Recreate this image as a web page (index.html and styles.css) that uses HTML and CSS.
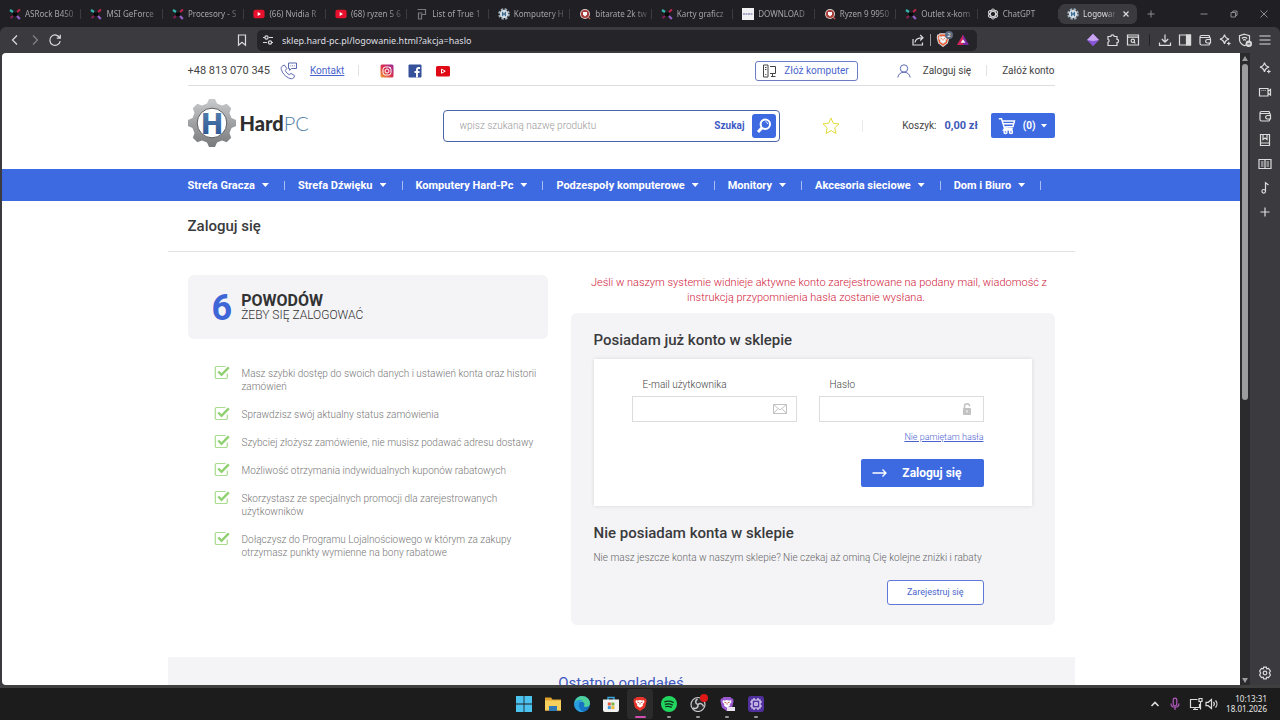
FILE: index.html
```html
<!DOCTYPE html>
<html lang="pl">
<head>
  <meta charset="UTF-8">
  <meta name="viewport" content="width=device-width, initial-scale=1">
  <title>Logowanie - HardPC</title>
  <link rel="stylesheet" href="styles.css">
</head>
<body>

<!-- Wspólne ikony -->
<svg class="sprite" aria-hidden="true">
  <symbol id="i-xkom" viewBox="0 0 12 12">
    <path d="M4 4 6 5 8 4 8.500 6 8 8.500 6 8 4 8.500 3.500 6z" fill="#0a0a0c"/>
    <path d="M1 2l3 2" stroke="#35b5ad" stroke-width="2.200"/>
    <path d="M11 1.500 8 4" stroke="#c2264c" stroke-width="2"/>
    <path d="M1.500 10 4 8" stroke="#8c1f55" stroke-width="2"/>
    <path d="M8 8l2.800 3" stroke="#9560c9" stroke-width="2.200"/>
  </symbol>
  <symbol id="i-yt" viewBox="0 0 14 12">
    <rect x="0.500" y="1" width="13" height="10" rx="2.500" fill="#e8112d"/>
    <path d="M5.500 3.800v4.400L9.300 6z" fill="#fff"/>
  </symbol>
  <symbol id="i-gear" viewBox="0 0 12 12">
    <circle cx="6" cy="6" r="4.800" fill="none" stroke="#9fb0bd" stroke-width="2" stroke-dasharray="2.400 1.370"/>
    <circle cx="6" cy="6" r="4" fill="#dfe7ec"/>
    <path d="M4.600 3.800v4.400M7.400 3.800v4.400M4.600 6h2.800" stroke="#3c6c94" stroke-width="1.400"/>
  </symbol>
  <symbol id="i-bit" viewBox="0 0 12 12">
    <circle cx="6" cy="6" r="5" fill="#d9cdca"/>
    <circle cx="6" cy="6" r="4" fill="#a83c38"/>
    <path d="M4 4h4v2.500L6 8.500 4 6.500z" fill="#fff"/>
    <path d="M9 9l2.200 2.200" stroke="#d06050" stroke-width="1.200"/>
  </symbol>
  <symbol id="i-spark" viewBox="0 0 14 14">
    <path d="M6.500 1.500c.6 3 1.600 4 4.500 4.600-2.900.6-3.900 1.700-4.500 4.900C5.900 7.800 4.900 6.700 2 6.100c2.900-.6 3.900-1.600 4.500-4.600zM10.800 8.700v3.600M9 10.500h3.600"/>
  </symbol>
  <symbol id="i-wallet" viewBox="0 0 14 14">
    <path d="M11.500 4.500V3.500a1 1 0 0 0-1-1h-7a1.500 1.500 0 0 0-1.500 1.500v6.500a1.500 1.500 0 0 0 1.500 1.500h7a1 1 0 0 0 1-1V10M2.500 4.500h9a.8.8 0 0 1 .8.800V7M12.500 6.500H9a1.800 1.800 0 0 0 0 3.500h3.500z"/>
  </symbol>
  <symbol id="i-check" viewBox="0 0 16 15">
    <path d="M11.500 1.500H2.500a1.200 1.200 0 0 0-1.200 1.200v9.600a1.200 1.200 0 0 0 1.200 1.200h9.600a1.200 1.200 0 0 0 1.200-1.200V8.500" fill="none" stroke="#a9dc8e" stroke-width="1.200"/>
    <path d="M4.300 6.500l3.200 3.300 7.300-7.500" fill="none" stroke="#8fd070" stroke-width="2.400"/>
  </symbol>
  <symbol id="i-lion" viewBox="0 0 16 16">
    <path d="M4.500 1h7l1.200 1.400 1.300 0 .6 2.600-1.500 6.500L8 15.300 2.900 11.500 1.400 5 2 2.400l1.300 0z"/>
    <path d="M4 4.200l2 .4 2-.6 2 .6 2-.4.500 1.800-1.800 2.200.2 1.500L8 11.800 5.100 9.700l.2-1.500L3.500 6z" fill="#fff"/>
    <path d="M5.400 6.200l1.600.5M10.600 6.200L9 6.700M8 6.700v2" stroke="#c23a2a" stroke-width=".8"/>
  </symbol>
</svg>

<!-- Karty przeglądarki -->
<header class="tabs">
  <nav class="tab-list" aria-label="Karty">
    <a class="tab" href="#"><svg class="fav"><use href="#i-xkom"/></svg><span>ASRock B450</span></a>
    <a class="tab" href="#"><svg class="fav"><use href="#i-xkom"/></svg><span>MSI GeForce</span></a>
    <a class="tab" href="#"><svg class="fav"><use href="#i-xkom"/></svg><span>Procesory - S</span></a>
    <a class="tab" href="#"><svg class="fav"><use href="#i-yt"/></svg><span>(66) Nvidia R</span></a>
    <a class="tab" href="#"><svg class="fav"><use href="#i-yt"/></svg><span>(68) ryzen 5 6</span></a>
    <a class="tab" href="#"><svg class="fav" viewBox="0 0 12 12"><path d="M1.500 1.500h8v5h-4v4.500h-3V5h4" fill="none" stroke="#77777c" stroke-width="1.200"/></svg><span>List of True 1</span></a>
    <a class="tab" href="#"><svg class="fav"><use href="#i-gear"/></svg><span>Komputery H</span></a>
    <a class="tab" href="#"><svg class="fav"><use href="#i-bit"/></svg><span>bitarate 2k tw</span></a>
    <a class="tab" href="#"><svg class="fav"><use href="#i-xkom"/></svg><span>Karty graficz</span></a>
    <a class="tab" href="#"><svg class="fav" viewBox="0 0 12 12"><path d="M0 0h12v12H0z" fill="#f1f1f4"/><path d="M1 6h10" stroke="#8f93b5" stroke-width="1.500" stroke-dasharray="2 .5"/></svg><span>DOWNLOAD</span></a>
    <a class="tab" href="#"><svg class="fav"><use href="#i-bit"/></svg><span>Ryzen 9 9950</span></a>
    <a class="tab" href="#"><svg class="fav"><use href="#i-xkom"/></svg><span>Outlet x-kom</span></a>
    <a class="tab" href="#"><svg class="fav" viewBox="0 0 12 12"><g fill="none" stroke="#d6d6d8" stroke-width="1"><ellipse cx="6" cy="6" rx="2.600" ry="5"/><ellipse cx="6" cy="6" rx="2.600" ry="5" transform="rotate(60 6 6)"/><ellipse cx="6" cy="6" rx="2.600" ry="5" transform="rotate(120 6 6)"/></g></svg><span>ChatGPT</span></a>
    <div class="tab active"><svg class="fav"><use href="#i-gear"/></svg><span>Logowan</span>
      <button class="icon-btn close" aria-label="Zamknij kartę"><svg viewBox="0 0 8 8"><path d="M1.500 1.500l5 5M6.500 1.500l-5 5"/></svg></button>
    </div>
  </nav>
  <div class="window-buttons">
    <button class="icon-btn" aria-label="Nowa karta"><svg viewBox="0 0 10 10"><path d="M5 1.500v7M1.500 5h7"/></svg></button>
    <span class="drag"></span>
    <button class="icon-btn" aria-label="Minimalizuj"><svg viewBox="0 0 10 10"><path d="M1.500 5h7"/></svg></button>
    <button class="icon-btn" aria-label="Przywróć"><svg viewBox="0 0 10 10"><path d="M2 3.500h4.500V8H2zM3.800 3.500V2H8v4.500H6.500"/></svg></button>
    <button class="icon-btn" aria-label="Zamknij"><svg viewBox="0 0 10 10"><path d="M1.500 1.500l7 7M8.500 1.500l-7 7"/></svg></button>
  </div>
</header>

<div class="toolbar">
  <div class="tool-left">
    <button class="icon-btn" aria-label="Wstecz"><svg viewBox="0 0 14 14"><path d="M9 2.500L4.500 7 9 11.500"/></svg></button>
    <button class="icon-btn dim" aria-label="Dalej"><svg viewBox="0 0 14 14"><path d="M5 2.500L9.500 7 5 11.500"/></svg></button>
    <button class="icon-btn" aria-label="Odśwież"><svg viewBox="0 0 14 14"><path d="M11.800 5A5.200 5.200 0 1 0 12.200 8M12.300 1.800V5.200H8.800"/></svg></button>
    <button class="icon-btn bookmark" aria-label="Dodaj zakładkę"><svg viewBox="0 0 14 14"><path d="M3.500 2h7v10.200L7 9.300l-3.500 2.900z"/></svg></button>
  </div>
  <div class="url-bar">
    <svg viewBox="0 0 14 14"><path d="M2 4.500h2M8 4.500h4M2 9.500h4M10 9.500h2"/><circle cx="5.500" cy="4.500" r="1.600"/><circle cx="9" cy="9.500" r="1.600"/></svg>
    <input type="text" aria-label="Adres strony" value="sklep.hard-pc.pl/logowanie.html?akcja=haslo">
    <button class="icon-btn" aria-label="Udostępnij"><svg viewBox="0 0 14 14"><path d="M2 6v6h9.500V9.500M4 9.500C4.300 6 6.500 4.800 11.500 4.800M9.200 2l2.800 2.800-2.800 2.700"/></svg></button>
    <span class="url-sep"></span>
    <button class="icon-btn shield" aria-label="Osłony"><svg viewBox="0 0 16 16"><use href="#i-lion" fill="#f0562d"/></svg><span class="badge">2</span></button>
    <button class="icon-btn" aria-label="Nagrody"><svg viewBox="0 0 14 14"><path d="M7 1.500L1 12h6V8.500z" fill="#d0245c" stroke="none"/><path d="M7 1.500L13 12H7V8.500z" fill="#7b2aa0" stroke="none"/><path d="M7 6.200L4.600 9.800h4.800z" fill="#fff" stroke="none"/></svg></button>
  </div>
  <div class="tool-right">
    <button class="icon-btn" aria-label="Rozszerzenie"><svg viewBox="0 0 14 14"><path d="M7 .8L13 7 7 13.200 1 7z" fill="#8a55d6" stroke="none"/><path d="M7 .8L13 7 7 8 1 7z" fill="#c9a6f2" stroke="none"/></svg></button>
    <button class="icon-btn" aria-label="Rozszerzenia"><svg viewBox="0 0 14 14"><path d="M2 3.500h2.800a1.700 1.700 0 1 1 3.400 0H11v2.800a1.600 1.600 0 1 1 0 3.200v3H2V9.300a1.500 1.500 0 0 0 0-2.900z"/></svg></button>
    <button class="icon-btn" aria-label="Szukaj kart"><svg viewBox="0 0 14 14"><path d="M1.500 2h11v10h-11zM1.500 4.200h11"/><circle cx="6.800" cy="7.800" r="1.700"/><path d="M8 9l1.300 1.300"/></svg></button>
    <span class="tool-sep"></span>
    <button class="icon-btn" aria-label="Pobrane"><svg viewBox="0 0 14 14"><path d="M7 1.500v7.500M3.800 6L7 9.200 10.200 6M1.500 9.500v2.800h11V9.500"/></svg></button>
    <button class="icon-btn" aria-label="Panel boczny"><svg viewBox="0 0 14 14"><path d="M1.500 2h11v10h-11z"/><path d="M8.500 2h4v10h-4z" fill="#dcdcde"/></svg></button>
    <button class="icon-btn" aria-label="Portfel"><svg><use href="#i-wallet"/></svg></button>
    <button class="icon-btn" aria-label="Leo"><svg><use href="#i-spark"/></svg></button>
    <button class="icon-btn" aria-label="VPN"><svg viewBox="0 0 14 14"><path d="M6.500 1.200l5 1.500v4c0 2.500-2 4.500-5 6-3-1.500-5-3.500-5-6v-4zM3.800 5.500c1.600-1.300 3.800-1.300 5.400 0M5 7.200c1-.7 2-.7 3 0"/><circle cx="10.800" cy="10.800" r="2.600" fill="#cfcfd2"/><path d="M9.500 10.800h2.600" stroke="#555"/></svg></button>
    <button class="icon-btn" aria-label="Menu"><svg viewBox="0 0 14 14"><path d="M1.500 3h11M1.500 7h11M1.500 11h11"/></svg></button>
  </div>
</div>

<div class="window">
  <div class="page">
    <div class="container topbar">
      <span class="phone">+48 813 070 345</span>
      <svg class="phone-icon" viewBox="0 0 18 18"><path d="M2.200 4.200L4.300 3l2.500 3.500-1.500 2c.8 1.900 2 3.200 4 4.200l1.800-1.300 3.600 2.400-1.200 2.300c-1.200.9-3 .8-5-.2C5 14.200 2.500 11.300 1.300 7.500.9 6 1.300 4.900 2.200 4.200zM8.500 1h8v5.500h-5l-2 1.800V6.500h-1zM10.500 3.800h.8M12.200 3.800h.8M13.900 3.800h.8"/></svg>
      <a class="contact" href="#">Kontakt</a>
      <div class="social">
        <a href="#" aria-label="Instagram"><svg viewBox="0 0 14 14"><defs><linearGradient id="ig" x1="0" y1="1" x2="1" y2="0"><stop offset="0" stop-color="#f2a33a"/><stop offset=".5" stop-color="#d92e4c"/><stop offset="1" stop-color="#9a2b9b"/></linearGradient></defs><rect x=".5" y=".5" width="13" height="13" rx="1.500" fill="url(#ig)"/><rect x="3" y="3" width="8" height="8" rx="2.500" fill="none" stroke="#fff"/><circle cx="7" cy="7" r="2" fill="none" stroke="#fff"/><circle cx="10" cy="3.800" r=".8" fill="#fff"/></svg></a>
        <a href="#" aria-label="Facebook"><svg viewBox="0 0 14 14"><rect x=".5" y=".5" width="13" height="13" rx="1" fill="#36529b"/><path d="M9 13.500V8.300M12 4H10.500Q9 4 9 5.800V8M6.500 8h5" fill="none" stroke="#fff" stroke-width="1.900"/></svg></a>
        <a href="#" aria-label="YouTube"><svg viewBox="0 0 14 14"><rect y="2" width="14" height="10.500" rx="1.500" fill="#e00a17"/><path d="M5.500 5.200v4l3.800-2z" fill="#e00a17" stroke="#fff"/></svg></a>
      </div>
      <a class="build" href="#"><svg viewBox="0 0 15 14"><path d="M1.500 1h4.500v12H1.500zM3 3.500h1.500M3 5.500h1.500M3.800 10v1M8 2.500h5.500v7H8M13.500 12.500H9M10.500 9.500v3"/></svg>Złóż komputer</a>
      <svg class="user-icon" viewBox="0 0 14 14"><circle cx="7" cy="4.500" r="3.700"/><path d="M.8 13.500C1.500 10 3.800 8.200 7 8.200s5.500 1.800 6.200 5.300"/></svg>
      <a class="login-link" href="#">Zaloguj się</a>
      <a class="register-link" href="#">Załóż konto</a>
    </div>

    <div class="container shop-header">
      <a class="logo" href="#" aria-label="HardPC">
        <svg viewBox="0 0 48 48">
          <defs>
            <linearGradient id="steel" x1="0" y1="0" x2="0" y2="1"><stop offset="0" stop-color="#c9cacb"/><stop offset="1" stop-color="#77797b"/></linearGradient>
            <linearGradient id="blue" x1="0" y1="0" x2="0" y2="1"><stop offset="0" stop-color="#5b87b2"/><stop offset="1" stop-color="#234f91"/></linearGradient>
          </defs>
          <path fill="url(#steel)" d="M21 0h6l2 4.500 5 2 4.700-1.700 4.500 4.500-1.700 4.700 2 5L48 21v6l-4.500 2-2 5 1.700 4.700-4.500 4.500-4.700-1.700-5 2L27 48h-6l-2-4.500-5-2-4.700 1.700-4.500-4.500L6.500 34l-2-5L0 27v-6l4.500-2 2-5-1.700-4.700 4.500-4.500L14 6.500l5-2z"/>
          <circle cx="24" cy="24" r="14.800" fill="#fff" stroke="#5c5e61" stroke-width="1"/>
          <text x="24" y="35" text-anchor="middle" fill="url(#blue)">H</text>
        </svg>
        <span class="logo-text"><b>Hard</b>PC</span>
      </a>
      <form class="search">
        <input type="search" aria-label="Szukaj produktu" placeholder="wpisz szukaną nazwę produktu">
        <button type="button"><span>Szukaj</span><span class="search-icon"><svg viewBox="0 0 16 16"><circle cx="9.300" cy="6.300" r="4.700"/><path d="M5.800 10L2 14" stroke-width="3"/><path d="M9.500 3.800c1.300.2 2 1 2.200 2.200" stroke-width="1"/></svg></span></button>
      </form>
      <div class="basket">
        <a class="star" href="#" aria-label="Ulubione"><svg viewBox="0 0 18 18"><path d="M9 1l2.300 5.300 5.700.6-4.200 3.900 1.200 5.700L9 13.600l-5 2.900 1.200-5.700L1 6.900l5.700-.6z"/></svg></a>
        <span class="basket-label">Koszyk:</span>
        <span class="basket-sum">0,00 zł</span>
        <button class="basket-btn"><svg viewBox="0 0 18 18"><path d="M.8 1.800h2.700l3 9.700h8.300M4 4h12.500l-1.500 5.500-9 .5M5 6.800h10.500M6.500 11.500L5.500 13h9"/><circle cx="7.500" cy="15" r="1.500"/><circle cx="13" cy="15" r="1.500"/></svg>(0)<span class="caret"></span></button>
      </div>
    </div>

    <nav class="menu" aria-label="Kategorie">
      <ul class="container">
        <li><a href="#">Strefa Gracza<span class="caret"></span></a></li>
        <li><a href="#">Strefa Dźwięku<span class="caret"></span></a></li>
        <li><a href="#">Komputery Hard-Pc<span class="caret"></span></a></li>
        <li><a href="#">Podzespoły komputerowe<span class="caret"></span></a></li>
        <li><a href="#">Monitory<span class="caret"></span></a></li>
        <li><a href="#">Akcesoria sieciowe<span class="caret"></span></a></li>
        <li><a href="#">Dom i Biuro<span class="caret"></span></a></li>
      </ul>
    </nav>

    <h1 class="page-title">Zaloguj się</h1>

    <main class="container content">
      <section>
        <div class="reasons-head">
          <strong class="six">6</strong>
          <h2>POWODÓW <small>ŻEBY SIĘ ZALOGOWAĆ</small></h2>
        </div>
        <ul class="reasons">
          <li><svg><use href="#i-check"/></svg>Masz szybki dostęp do swoich danych i ustawień konta oraz historii zamówień</li>
          <li><svg><use href="#i-check"/></svg>Sprawdzisz swój aktualny status zamówienia</li>
          <li><svg><use href="#i-check"/></svg>Szybciej złożysz zamówienie, nie musisz podawać adresu dostawy</li>
          <li><svg><use href="#i-check"/></svg>Możliwość otrzymania indywidualnych kuponów rabatowych</li>
          <li><svg><use href="#i-check"/></svg>Skorzystasz ze specjalnych promocji dla zarejestrowanych użytkowników</li>
          <li><svg><use href="#i-check"/></svg>Dołączysz do Programu Lojalnościowego w którym za zakupy otrzymasz punkty wymienne na bony rabatowe</li>
        </ul>
      </section>

      <section>
        <p class="notice"><span>Jeśli w naszym systemie widnieje aktywne konto zarejestrowane na podany mail, wiadomość z instrukcją przypomnienia hasła zostanie wysłana.</span></p>
        <div class="panel">
          <h2>Posiadam już konto w sklepie</h2>
          <form class="login-form">
            <div class="fields">
              <div class="field">
                <label for="email">E-mail użytkownika</label>
                <div class="input-box">
                  <input type="email" id="email">
                  <svg viewBox="0 0 14 14"><path d="M.5 2.500h13v9H.5zM.5 2.500L7 8l6.500-5.500M.5 11.500L5 6.500M13.500 11.500L9 6.500"/></svg>
                </div>
              </div>
              <div class="field">
                <label for="password">Hasło</label>
                <div class="input-box">
                  <input type="password" id="password">
                  <svg viewBox="0 0 14 14"><path d="M4.500 6.500V4.300a2.500 2.500 0 0 1 5 0" stroke-width="1.500"/><path d="M3.500 6.500h7v6h-7z" fill="#c2c2c2"/><path d="M7 8.200v2.300" stroke="#fff"/></svg>
                </div>
              </div>
            </div>
            <a class="forgot" href="#">Nie pamiętam hasła</a>
            <button type="button" class="login-btn"><svg viewBox="0 0 15 10"><path d="M.5 5h13.500M10.500 1.500L14 5l-3.500 3.500"/></svg><span>Zaloguj się</span></button>
          </form>
          <h2>Nie posiadam konta w sklepie</h2>
          <p class="hint">Nie masz jeszcze konta w naszym sklepie? Nie czekaj aż ominą Cię kolejne zniżki i rabaty</p>
          <a class="register-btn" href="#">Zarejestruj się</a>
        </div>
      </section>
    </main>

    <section class="recent"><h2>Ostatnio oglądałeś</h2></section>
  </div>

  <div class="scrollbar">
    <span class="arrow up"></span>
    <span class="thumb"></span>
    <span class="track"></span>
    <span class="arrow down"></span>
  </div>

  <aside class="sidebar">
    <button class="icon-btn" aria-label="Leo AI"><svg><use href="#i-spark"/></svg></button>
    <button class="icon-btn" aria-label="Talk"><svg viewBox="0 0 14 14"><path d="M1.500 3.500h8.500v7.500H1.500zM10 6.300l2.500-1.800v5.500L10 8.300M3.500 5.500h.8M5.500 5.500h.8M7.500 5.500h.5"/></svg></button>
    <button class="icon-btn" aria-label="Portfel"><svg><use href="#i-wallet"/></svg></button>
    <button class="icon-btn" aria-label="Zakładki"><svg viewBox="0 0 14 14"><path d="M2.500 1.500h9v11h-9zM2.500 10h9M5 1.500v5l2-1.500 2 1.500v-5"/></svg></button>
    <button class="icon-btn" aria-label="Lista do przeczytania"><svg viewBox="0 0 14 14"><path d="M1 2.500h12v9H1zM7 2.500V12M3 5h2.500M3 7h2.500M3 9h2.500M8.500 5H11M8.500 7H11M8.500 9H11"/></svg></button>
    <button class="icon-btn" aria-label="Playlista"><svg viewBox="0 0 14 14"><path d="M7.500 10V1.800l3 2.200"/><circle cx="5.700" cy="10.300" r="1.800"/></svg></button>
    <button class="icon-btn" aria-label="Dodaj"><svg viewBox="0 0 14 14"><path d="M7 2.500v9M2.500 7h9"/></svg></button>
    <button class="icon-btn settings" aria-label="Ustawienia"><svg viewBox="0 0 14 14"><path d="M5.700 1.200h2.600l.5 1.700 1.700-.4 1.900 2.500L11.300 7l1.100 2-1.900 2.500-1.700-.4-.5 1.700H5.700l-.5-1.700-1.700.4L1.600 9l1.100-2-1.100-2 1.900-2.500 1.700.4z"/><circle cx="7" cy="7" r="1.800"/></svg></button>
  </aside>
</div>

<!-- Pasek zadań -->
<footer class="taskbar">
  <div class="apps">
    <button class="app" aria-label="Start"><svg viewBox="0 0 16 16"><path d="M0 0h7.600v7.600H0zM8.400 0H16v7.600H8.400zM0 8.400h7.600V16H0zM8.400 8.400H16V16H8.400z" fill="#4cc2f1"/></svg></button>
    <button class="app" aria-label="Eksplorator"><svg viewBox="0 0 16 16"><path d="M0 1.500h6l1.500 2H16v11H0z" fill="#e0a32e"/><path d="M0 4.500h16v10H0z" fill="#f6cf5c"/><path d="M4 10h8v5H4z" fill="#2e78b5"/></svg></button>
    <button class="app" aria-label="Edge"><svg viewBox="0 0 16 16"><circle cx="8" cy="8" r="8" fill="#1673c4"/><path d="M.3 7C1.500 2.500 4.500 0 8 0c4.500 0 8 3.300 8 7.300 0 2.500-2 3.700-4.200 3.700-1.500 0-2.300-.5-1.800-1.200 1.200-1.800 0-4-2.700-4C4.500 5.800 1.800 6 .3 7z" fill="#4dd09b"/><path d="M.3 7C2 3.800 6 2.800 9 4.500c-3 .5-5 3-4 6.500.6 2.200 2.500 4 5 4.700C5 17-.5 13 .3 7z" fill="#2a9fdf"/></svg></button>
    <button class="app" aria-label="Sklep"><svg viewBox="0 0 16 16"><path d="M5 4V1.500h6V4" fill="none" stroke="#38a8df" stroke-width="1.400"/><path d="M0 3.500h16V14a2 2 0 0 1-2 2H2a2 2 0 0 1-2-2z" fill="#f1f1f1"/><path d="M4.800 6.500h3v3h-3z" fill="#e35b3a"/><path d="M8.400 6.500h3v3h-3z" fill="#7db543"/><path d="M4.800 10.100h3v3h-3z" fill="#3799d8"/><path d="M8.400 10.100h3v3h-3z" fill="#f0b73a"/></svg></button>
    <button class="app current" aria-label="Brave"><svg viewBox="0 0 16 16"><use href="#i-lion" fill="#e8352b"/></svg></button>
    <button class="app running" aria-label="Spotify"><svg viewBox="0 0 16 16"><circle cx="8" cy="8" r="8" fill="#22d75f"/><path d="M3.300 5.800c3.200-1 6.500-.7 9.400.8M3.800 8.300c2.800-.8 5.500-.5 8 .8M4.300 10.700c2.300-.6 4.500-.3 6.500.7" fill="none" stroke="#12301c" stroke-width="1.300"/></svg></button>
    <button class="app running" aria-label="OBS"><svg viewBox="0 0 16 16"><circle cx="8" cy="8.500" r="7" fill="#2a2a2c" stroke="#c9c9cb" stroke-width="1.200"/><path d="M8 8.500C5 7.500 5 4.500 7.500 3M8 8.500c2.500-2 5-.5 5.500 2M8 8.500c.5 3-2 5-5 3.500" fill="none" stroke="#c9c9cb" stroke-width="1.500"/></svg><span class="rec"></span></button>
    <button class="app running" aria-label="Brave Beta"><svg viewBox="0 0 16 16"><use href="#i-lion" fill="#9b59d0"/><path d="M8 11h8v4H8z" fill="#e9e3f0"/></svg></button>
    <button class="app running" aria-label="Monitor"><svg viewBox="0 0 16 16"><rect width="16" height="16" rx="3" fill="#50309c"/><path d="M4 4h8v8H4zM6.800 6.800h2.400v2.400H6.800zM6 2v2M10 2v2M6 12v2M10 12v2M2 6h2M2 10h2M12 6h2M12 10h2" fill="none" stroke="#e6defa" stroke-width="1.200"/></svg></button>
  </div>
  <div class="tray">
    <button class="icon-btn" aria-label="Ukryte ikony"><svg viewBox="0 0 14 14"><path d="M3.500 9L7 5.500 10.500 9" stroke-width="1.600"/></svg></button>
    <button class="icon-btn mic" aria-label="Mikrofon"><svg viewBox="0 0 14 14"><path d="M5.200 3a1.800 1.800 0 0 1 3.600 0v4a1.800 1.800 0 0 1-3.600 0zM3 6.500c0 5 8 5 8 0M7 10.500V13"/></svg></button>
    <div class="net">
      <svg viewBox="0 0 14 14"><path d="M8.500 2.500H1.500v8h9V7M4 12.500h5M6 10.500v2M10 1.500h3v3h-3zM11.500 4.500v8"/></svg>
      <svg viewBox="0 0 14 14"><path d="M1 5.300h2.200L6.500 2.500v9L3.200 8.700H1zM8.500 5c1 1.200 1 2.800 0 4M10.500 3.500c1.900 2 1.900 5 0 7"/></svg>
    </div>
    <time class="clock">10:13:31<br>18.01.2026</time>
  </div>
</footer>

</body>
</html>
```
FILE: styles.css
```css
* {
  box-sizing: border-box;
}
body {
  margin: 0;
  height: 100vh;
  display: flex;
  flex-direction: column;
  overflow: hidden;
  font-family: Roboto, "Liberation Sans", sans-serif;
  font-size: 10px;
  background: #202024;
  color: #444;
}
a {
  color: inherit;
  text-decoration: none;
}
button, input {
  font: inherit;
  color: inherit;
  border: 0;
  background: none;
  padding: 0;
  min-width: 0;
}
button {
  cursor: pointer;
}
ul, h1, h2, p {
  margin: 0;
  padding: 0;
  list-style: none;
}
svg {
  display: block;
  flex: none;
}
.sprite {
  display: none;
}
.icon-btn {
  width: 20px;
  height: 20px;
  flex: none;
  display: flex;
  align-items: center;
  justify-content: center;
}
.icon-btn svg, .net svg, .url-bar > svg {
  width: 14px;
  height: 14px;
  fill: none;
  stroke: #dcdcde;
  stroke-width: 1.2;
}
.caret {
  width: 7px;
  height: 4px;
  background: currentColor;
  clip-path: polygon(0 0, 100% 0, 50% 100%);
}

/* Karty */
.tabs {
  height: 27px;
  flex: none;
  display: flex;
  align-items: center;
  background: #202024;
  font-family: "Noto Sans", sans-serif;
  font-size: 8px;
  color: #a5a5a9;
}
.tab-list {
  flex: 1;
  display: flex;
  align-items: center;
  min-width: 0;
}
.tab {
  flex: 1;
  min-width: 0;
  display: flex;
  align-items: center;
  gap: 4px;
  padding: 0 3px 0 9px;
  height: 20px;
  background: linear-gradient(#3c3c40, #3c3c40) right center / 1px 10px no-repeat;
}
.tab span {
  flex: 1;
  min-width: 0;
  white-space: nowrap;
  mask-image: linear-gradient(to right, #000 70%, rgba(0, 0, 0, 0.2));
}
.fav {
  width: 12px;
  height: 12px;
}
.tab.active {
  flex: none;
  width: 78px;
  padding: 0 4px 0 8px;
  border-radius: 6px;
  background: #3b3b3f;
  color: #dcdcde;
}
.close {
  width: 14px;
}
.close svg {
  width: 8px;
  height: 8px;
}
.window-buttons {
  width: 143px;
  display: flex;
  padding: 0 6px 0 4px;
}
.window-buttons .icon-btn {
  width: 20px;
}
.window-buttons .icon-btn + .icon-btn {
  margin-left: 10px;
}
.window-buttons svg {
  width: 10px;
  height: 10px;
  stroke: #8b8b8f;
  stroke-width: 1;
}
.drag {
  flex: 1;
}

/* Pasek adresu */
.toolbar {
  height: 26px;
  flex: none;
  display: grid;
  grid-template-columns: 257px 1fr 303px;
  align-items: center;
  background: #3b3b3f;
  border-radius: 6px 6px 0 0;
}
.tool-left, .tool-right {
  display: flex;
  align-items: center;
  padding: 0 5px;
}
.tool-right {
  justify-content: flex-end;
}
.dim {
  opacity: 0.45;
}
.bookmark {
  margin-left: auto;
}
.tool-sep {
  width: 12px;
  height: 12px;
  background: linear-gradient(#222, #222) center / 1px 12px no-repeat;
}
.url-bar {
  height: 21px;
  display: flex;
  align-items: center;
  padding: 0 4px;
  background: #252529;
  border-radius: 5px;
  font-family: "Noto Sans", sans-serif;
  font-size: 9px;
  color: #dedee0;
}
.url-bar input {
  flex: 1;
  margin-left: 7px;
}
.url-sep {
  width: 1px;
  height: 12px;
  margin: 0 2px;
  background: #9a9a9e;
}
.shield {
  position: relative;
}
.badge {
  position: absolute;
  top: 1px;
  right: 0;
  width: 8px;
  height: 8px;
  border-radius: 50%;
  background: #5f6b80;
  color: #fff;
  font-size: 6px;
  line-height: 8px;
}

/* Okno strony */
.window {
  flex: 1;
  min-height: 0;
  display: flex;
  padding-left: 2px;
  background: #3b3b3f;
  border-bottom: 3px solid #3f3f40;
}
.page {
  flex: 1;
  overflow: hidden;
  background: #fff;
  border-radius: 4px 0 0 4px;
}
.container {
  max-width: 867px;
  margin: 0 auto;
}
.topbar {
  height: 33px;
  display: flex;
  align-items: center;
  padding-top: 3px;
  border-bottom: 1px solid #dedee2;
}
.phone {
  font-size: 11px;
}
.phone-icon, .user-icon {
  width: 18px;
  height: 18px;
  margin: 0 12px 0 10px;
  fill: none;
  stroke: #5b69b0;
}
.contact {
  color: #4a66cc;
  text-decoration: underline;
  padding-right: 14px;
  border-right: 1px solid #e2e2e6;
}
.social {
  display: flex;
  gap: 14px;
  margin: 0 auto 0 21px;
}
.social svg {
  width: 14px;
  height: 14px;
}
.build {
  display: flex;
  align-items: center;
  gap: 7px;
  height: 20px;
  padding: 0 8px 0 6px;
  border: 1px solid #6b7cc4;
  border-radius: 3px;
  color: #4a66cc;
}
.build svg {
  width: 15px;
  height: 14px;
  fill: none;
  stroke: #444;
}
.user-icon {
  width: 14px;
  height: 14px;
  margin: 0 12px 0 39px;
}
.login-link {
  padding-right: 15px;
  border-right: 1px solid #e2e2e6;
}
.register-link {
  padding-left: 15px;
}

/* Nagłówek sklepu */
.shop-header {
  height: 83px;
  display: flex;
  align-items: center;
  padding-bottom: 4px;
}
.logo {
  width: 255px;
  display: flex;
  align-items: center;
  gap: 4px;
  margin-bottom: 6px;
}
.logo svg {
  width: 48px;
  height: 48px;
}
.logo text {
  font-family: Roboto, sans-serif;
  font-size: 30px;
  font-weight: 900;
}
.logo-text {
  font-family: Lato, sans-serif;
  font-size: 20px;
  font-weight: 300;
  color: #4f7fa5;
}
.logo-text b {
  font-weight: 900;
  color: #2e2e30;
}
.search {
  flex: 1;
  min-width: 0;
  display: flex;
  height: 32px;
  padding: 0 3px 0 16px;
  border: 1px solid #4c64a8;
  border-radius: 4px;
}
.search input {
  flex: 1;
  font-weight: 300;
}
.search input::placeholder {
  color: #999;
}
.search button {
  display: flex;
  align-items: center;
  gap: 7px;
  font-weight: 700;
  color: #3f5bc4;
}
.search-icon {
  padding: 4px;
  border-radius: 3px;
  background: #3e6ae1;
}
.search-icon svg {
  width: 16px;
  height: 16px;
  fill: none;
  stroke: #fff;
  stroke-width: 2;
}
.basket {
  width: 275px;
  display: flex;
  align-items: center;
}
.star {
  padding: 0 23px 0 42px;
  background: linear-gradient(#e8e8ec, #e8e8ec) right center / 1px 12px no-repeat;
}
.star svg {
  width: 18px;
  height: 18px;
  fill: none;
  stroke: #e3dc3c;
}
.basket-label {
  margin-left: auto;
}
.basket-sum {
  margin: 0 13px 0 8px;
  font-size: 11px;
  font-weight: 700;
  color: #4059b8;
}
.basket-btn {
  display: flex;
  align-items: center;
  gap: 7px;
  height: 25px;
  padding: 0 7px;
  border-radius: 2px;
  background: #3e6ae1;
  color: #fff;
  font-weight: 700;
}
.basket-btn svg {
  width: 18px;
  height: 18px;
  fill: none;
  stroke: #fff;
  stroke-width: 1.4;
}
.basket-btn .caret {
  margin-left: -2px;
}

/* Menu */
.menu {
  background: #3e6ae1;
  color: #fff;
  font-size: 11px;
  font-weight: 700;
}
.menu ul {
  display: flex;
  align-items: center;
  height: 32px;
}
.menu a {
  display: flex;
  align-items: center;
  gap: 7px;
  margin-right: 13px;
  padding-right: 16px;
  white-space: nowrap;
  background: linear-gradient(#a9bdf3, #a9bdf3) right center / 1px 9px no-repeat;
}

/* Treść */
.page-title {
  max-width: 907px;
  margin: 0 auto;
  padding: 0 20px;
  font-size: 15px;
  font-weight: 500;
  line-height: 50px;
  border-bottom: 1px solid #e2e2e6;
  color: #3a3a3c;
}
.content {
  display: grid;
  grid-template-columns: 360fr 484fr;
  gap: 23px;
  padding: 23px 0 32px;
}
.content section {
  min-width: 0;
}
.reasons-head {
  display: flex;
  align-items: center;
  gap: 9px;
  height: 64px;
  padding: 2px 0 0 24px;
  border-radius: 6px;
  background: #f4f4f7;
}
.six {
  font-size: 36px;
  color: #3e66d6;
}
.reasons-head h2 {
  font-size: 16px;
  font-weight: 700;
  line-height: 15px;
  color: #333;
}
.reasons-head small {
  display: block;
  font-size: 12px;
  font-weight: 300;
}
.reasons {
  display: flex;
  flex-direction: column;
  gap: 15px;
  padding: 28px 9px 0 26px;
}
.reasons li {
  display: flex;
  gap: 12px;
  line-height: 13px;
  font-weight: 300;
  color: #777;
}
.reasons svg {
  width: 16px;
  height: 15px;
  margin: -2px 0 0;
}
.notice {
  font-size: 11px;
  font-weight: 300;
  line-height: 15px;
  text-align: center;
  color: #d0213c;
}
.notice span {
  padding: 0 13px;
}
.panel {
  margin-top: 8px;
  padding: 17px 23px 20px;
  border-radius: 6px;
  background: #f4f4f7;
}
.panel h2 {
  font-size: 15px;
  font-weight: 500;
  line-height: 20px;
  color: #3a3a3c;
}
.login-form {
  display: flex;
  flex-direction: column;
  align-items: flex-end;
  margin: 9px 0 17px;
  padding: 18px 48px 19px 38px;
  background: #fff;
  box-shadow: 0 0 4px rgba(0, 0, 0, 0.12);
}
.fields {
  display: flex;
  gap: 22px;
  width: 100%;
}
.field {
  flex: 1;
  min-width: 0;
}
.field label {
  display: block;
  padding-left: 11px;
  line-height: 16px;
  font-weight: 300;
}
.input-box {
  display: flex;
  align-items: center;
  height: 26px;
  margin-top: 3px;
  padding: 0 9px;
  border: 1px solid #dcdcdc;
}
.input-box input {
  flex: 1;
  outline: 0;
}
.input-box svg {
  width: 14px;
  height: 14px;
  fill: none;
  stroke: #c2c2c2;
}
.forgot {
  margin: 8px 0 15px;
  font-size: 9px;
  line-height: 14px;
  font-weight: 300;
  color: #4a5fd0;
  text-decoration: underline;
}
.login-btn {
  display: flex;
  align-items: center;
  gap: 15px;
  height: 28px;
  padding: 0 22px 0 11px;
  border-radius: 2px;
  background: #3e6ae1;
  color: #fff;
  font-size: 12px;
  font-weight: 700;
}
.login-btn svg {
  width: 15px;
  height: 10px;
  fill: none;
  stroke: #fff;
  stroke-width: 1.3;
}
.hint {
  margin: 7px 0 14px;
  line-height: 16px;
  font-weight: 300;
  color: #666;
}
.register-btn {
  display: block;
  width: fit-content;
  margin: 0 48px 0 auto;
  padding: 0 19px;
  font-size: 9px;
  line-height: 23px;
  border: 1px solid #5f78d8;
  border-radius: 3px;
  background: #fff;
  color: #4a66cc;
}
.recent {
  max-width: 907px;
  margin: 0 auto;
  padding-top: 16px;
  background: #f4f4f7;
  text-align: center;
}
.recent h2 {
  font-size: 15px;
  font-weight: 400;
  line-height: 20px;
  color: #4059c0;
}

/* Pasek przewijania i panel boczny */
.scrollbar {
  width: 10px;
  display: flex;
  flex-direction: column;
  align-items: center;
  padding: 3px 0 2px;
  background: #2b2b2d;
}
.thumb {
  flex: 55;
  width: 6px;
  margin: 3px 0;
  border-radius: 3px;
  background: #9c9c9e;
}
.track {
  flex: 45;
}
.arrow {
  width: 6px;
  height: 5px;
  background: #9c9c9e;
}
.up {
  clip-path: polygon(0 100%, 100% 100%, 50% 0);
}
.down {
  clip-path: polygon(0 0, 100% 0, 50% 100%);
}
.sidebar {
  width: 30px;
  display: flex;
  flex-direction: column;
  align-items: center;
  gap: 4px;
  padding: 5px 0 2px;
}
.settings {
  margin-top: auto;
}

/* Pasek zadań */
.taskbar {
  height: 32px;
  flex: none;
  display: grid;
  grid-template-columns: 1fr auto 1fr;
  background: #1c1c1c;
}
.apps {
  grid-column: 2;
  display: flex;
  align-items: center;
  gap: 3px;
}
.app {
  position: relative;
  width: 26px;
  height: 30px;
  display: flex;
  align-items: center;
  justify-content: center;
  border-radius: 3px;
}
.app svg {
  width: 16px;
  height: 16px;
}
.current {
  background: #2b2b2c;
}
.app::after {
  position: absolute;
  bottom: 1px;
  width: 4px;
  height: 2px;
  border-radius: 1px;
}
.running::after {
  content: "";
  background: #98989a;
}
.current::after {
  content: "";
  width: 11px;
  background: #d04db0;
}
.rec {
  position: absolute;
  top: 5px;
  right: 3px;
  width: 8px;
  height: 8px;
  border-radius: 50%;
  background: #e01818;
}
.tray {
  display: flex;
  align-items: center;
  justify-content: flex-end;
  padding-right: 13px;
  color: #e8e8e8;
}
.tray .mic svg {
  stroke: #b458c0;
}
.net {
  display: flex;
  gap: 2px;
  padding: 0 7px 0 4px;
}
.clock {
  font-family: "Noto Sans", sans-serif;
  font-size: 8px;
  line-height: 10px;
  text-align: right;
}
```
